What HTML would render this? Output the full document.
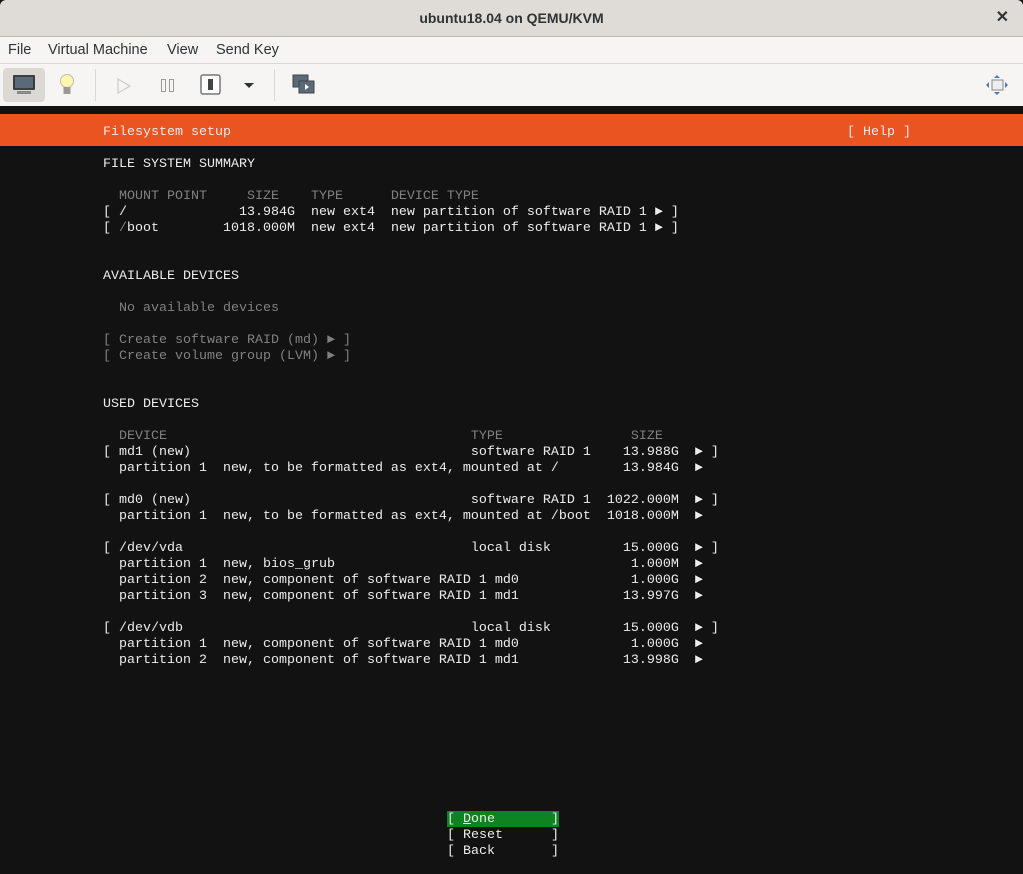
<!DOCTYPE html>
<html><head><meta charset="utf-8"><style>
*{margin:0;padding:0;box-sizing:border-box}
body{width:1023px;height:874px;overflow:hidden;background:#121212;font-family:"Liberation Sans",sans-serif;position:relative}
#title{position:absolute;left:0;top:0;width:1023px;height:37px;background:#dfdcd8;border-bottom:1px solid #c0b9b0;text-align:center;font-weight:bold;font-size:14px;line-height:36px;color:#2e3436;border-radius:6px 6px 0 0}
#close{position:absolute;right:14px;top:0;font-size:16px;line-height:36px;color:#2e3436}
#menu{position:absolute;left:0;top:37px;width:1023px;height:27px;background:#f6f5f4;border-bottom:1px solid #dcd8d4;font-size:14.5px;color:#2e3436}
#menu span{position:absolute;top:5px}
#tool{position:absolute;left:0;top:64px;width:1023px;height:42px;background:#f6f5f4}
.sep{position:absolute;top:5px;width:1px;height:32px;background:#dcd8d4}
pre{position:absolute;font-family:"Liberation Mono","DejaVu Sans Mono",monospace;font-size:13.33px;line-height:16px;color:#ececec;white-space:pre}
.g{color:#808080}
#orange{position:absolute;left:0;top:114px;width:1023px;height:32px;background:#e95420}
</style></head><body>
<div id="title">ubuntu18.04 on QEMU/KVM<span id="close">✕</span></div>
<div id="menu"><span style="left:8px">File</span><span style="left:48px">Virtual Machine</span><span style="left:167px">View</span><span style="left:216px">Send Key</span></div>
<div id="tool">
<div style="position:absolute;left:3px;top:4px;width:42px;height:34px;background:#dcd9d5;border-radius:4px"></div>
<svg style="position:absolute;left:12px;top:10px" width="24" height="22"><rect x="1" y="1" width="22" height="15" rx="1" fill="#3a3f44"/><rect x="3" y="3" width="18" height="11" fill="#5a6a7a"/><rect x="5" y="17" width="14" height="3" fill="#888"/></svg>
<svg style="position:absolute;left:58px;top:9px" width="18" height="24"><circle cx="9" cy="8" r="6.5" fill="#fff6b0" stroke="#bbb"/><rect x="5.5" y="14" width="7" height="7" fill="#999"/></svg>
<div class="sep" style="left:95px"></div>
<svg style="position:absolute;left:116px;top:13px" width="16" height="18"><path d="M2 2 L14 9 L2 16 Z" fill="none" stroke="#ccc" stroke-width="1.2"/></svg>
<svg style="position:absolute;left:160px;top:14px" width="16" height="16"><rect x="1.5" y="1.5" width="4" height="12" fill="none" stroke="#999"/><rect x="9.5" y="1.5" width="4" height="12" fill="none" stroke="#999"/></svg>
<svg style="position:absolute;left:200px;top:10px" width="22" height="22"><rect x="1" y="1" width="19" height="19" rx="2" fill="#fff" stroke="#777" stroke-width="1.5"/><rect x="8" y="5" width="5" height="11" fill="#444"/></svg>
<svg style="position:absolute;left:243px;top:18px" width="12" height="8"><path d="M1 1 L11 1 L6 6 Z" fill="#2e3436"/></svg>
<div class="sep" style="left:274px"></div>
<svg style="position:absolute;left:292px;top:10px" width="24" height="22"><rect x="1" y="1" width="15" height="12" fill="#5a6a7a" stroke="#444"/><rect x="7" y="7" width="15" height="12" fill="#5a6a7a" stroke="#444"/><path d="M13 10 L17 13 L13 16Z" fill="#fff"/></svg>
<svg style="position:absolute;left:985px;top:10px" width="24" height="22"><rect x="7" y="6" width="11" height="10" fill="#eee" stroke="#888"/><path d="M12 1 L15 4 L9 4Z M12 21 L15 18 L9 18Z M1 11 L4 8 L4 14Z M23 11 L20 8 L20 14Z" fill="#4a7ac0"/></svg>
</div>
<div id="orange"></div>
<pre style="left:103px;top:125px">Filesystem setup</pre>
<pre style="left:847px;top:125px">[ Help ]</pre>
<pre style="left:103px;top:157px">FILE SYSTEM SUMMARY

<span class="g">  MOUNT POINT     SIZE    TYPE      DEVICE TYPE</span>
[ /              13.984G  new ext4  new partition of software RAID 1 ► ]
[ <span class="g">/</span>boot        1018.000M  new ext4  new partition of software RAID 1 ► ]


AVAILABLE DEVICES

<span class="g">  No available devices</span>

<span class="g">[ Create software RAID (md) ► ]</span>
<span class="g">[ Create volume group (LVM) ► ]</span>


USED DEVICES

<span class="g">  DEVICE                                      TYPE                SIZE</span>
[ md1 (new)                                   software RAID 1    13.988G  ► ]
  partition 1  new, to be formatted as ext4, mounted at /        13.984G  ►

[ md0 (new)                                   software RAID 1  1022.000M  ► ]
  partition 1  new, to be formatted as ext4, mounted at /boot  1018.000M  ►

[ /dev/vda                                    local disk         15.000G  ► ]
  partition 1  new, bios_grub                                     1.000M  ►
  partition 2  new, component of software RAID 1 md0              1.000G  ►
  partition 3  new, component of software RAID 1 md1             13.997G  ►

[ /dev/vdb                                    local disk         15.000G  ► ]
  partition 1  new, component of software RAID 1 md0              1.000G  ►
  partition 2  new, component of software RAID 1 md1             13.998G  ►</pre>
<div style="position:absolute;left:447px;top:811px;width:112px;height:16px;background:#0e8420"></div>
<pre style="left:447px;top:812px">[ <u>D</u>one       ]
[ Reset      ]
[ Back       ]</pre>
</body></html>
